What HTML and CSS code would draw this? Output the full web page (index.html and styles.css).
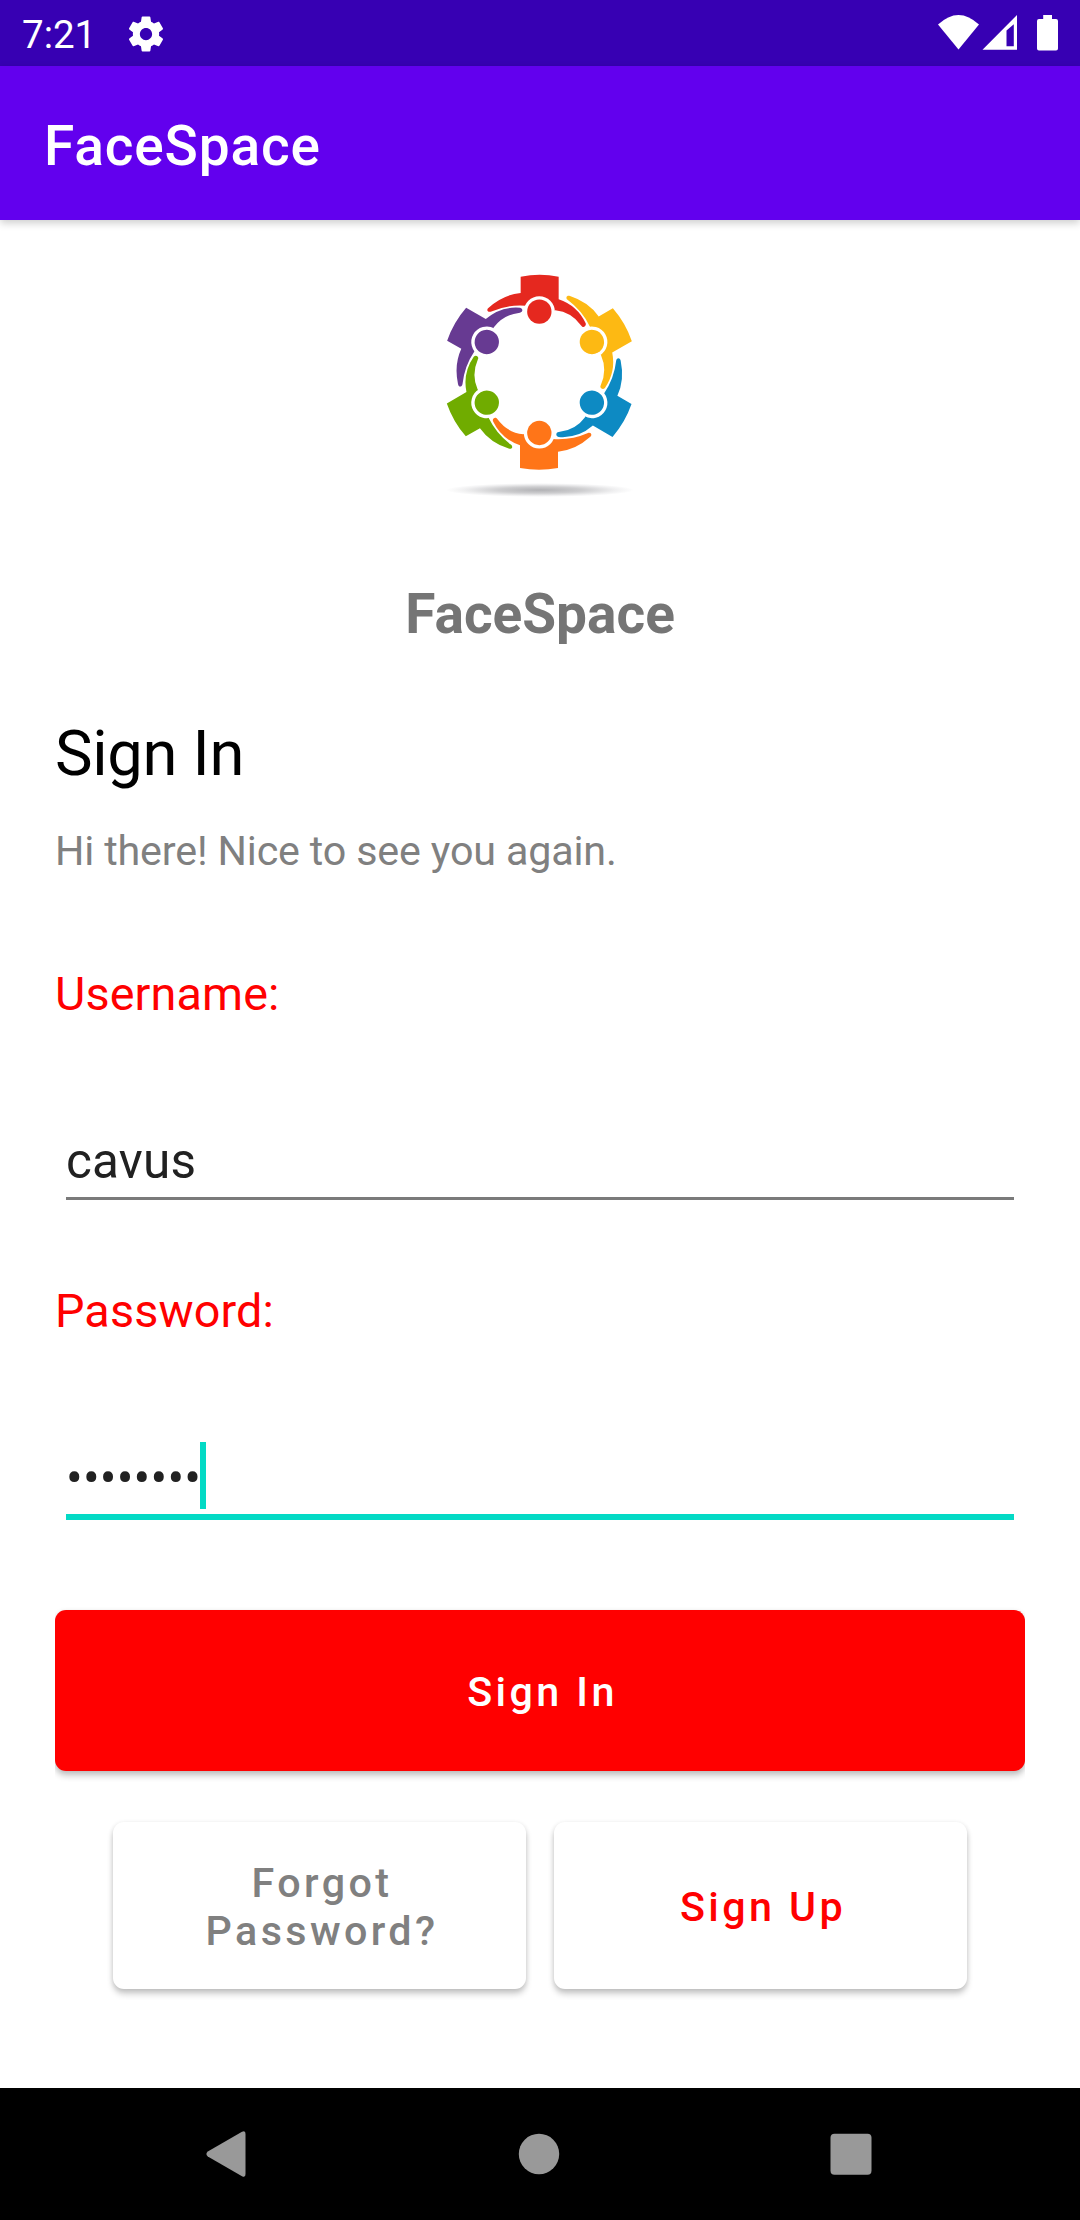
FILE: index.html
```html
<!DOCTYPE html>
<html lang="en">
<head>
<meta charset="utf-8">
<title>FaceSpace</title>
<link rel="stylesheet" href="styles.css">
</head>
<body>
<div class="status-bar">
  <span class="clock">7:21</span>
  <svg class="gear" viewBox="0 0 24 24"><path d="M19.43 12.98c.04-.32.07-.64.07-.98s-.03-.66-.07-.98l2.11-1.65c.19-.15.24-.42.12-.64l-2-3.46c-.12-.22-.39-.3-.61-.22l-2.49 1c-.52-.4-1.08-.73-1.69-.98l-.38-2.65C14.46 2.18 14.25 2 14 2h-4c-.25 0-.46.18-.49.42l-.38 2.65c-.61.25-1.17.59-1.69.98l-2.49-1c-.23-.09-.49 0-.61.22l-2 3.46c-.13.22-.07.49.12.64l2.11 1.65c-.04.32-.07.65-.07.98s.03.66.07.98l-2.11 1.65c-.19.15-.24.42-.12.64l2 3.46c.12.22.39.3.61.22l2.49-1c.52.4 1.08.73 1.69.98l.38 2.65c.03.24.24.42.49.42h4c.25 0 .46-.18.49-.42l.38-2.65c.61-.25 1.17-.59 1.69-.98l2.49 1c.23.09.49 0 .61-.22l2-3.46c.12-.22.07-.49-.12-.64l-2.11-1.65zM12 15.5c-1.93 0-3.5-1.57-3.5-3.5s1.57-3.5 3.5-3.5 3.5 1.57 3.5 3.5-1.57 3.5-3.5 3.5z"/></svg>
  <svg class="indicators" viewBox="0 0 120 36">
    <path d="M0 9.6Q20.500-9.600 41 9.600L20.500 34.500Z"/>
    <path fill-rule="evenodd" d="M44.500 34.800L79 0V34.800ZM68.500 15.500V31.300H75.800V9.200Z"/>
    <path d="M105.200 0H114V4H118Q120 4 120 6V33.500Q120 35.500 118 35.500H101Q99 35.500 99 33.500V6Q99 4 101 4H105.200Z"/>
  </svg>
</div>
<header class="app-bar">FaceSpace</header>
<main class="content">
  <svg class="logo" viewBox="0 0 660 750">
    <defs>
      <radialGradient id="shade">
        <stop offset="0" stop-color="#b2b2b5"/>
        <stop offset=".45" stop-color="#cdcdcf"/>
        <stop offset=".8" stop-color="#f0f0f1"/>
        <stop offset="1" stop-color="#fff"/>
      </radialGradient>
      <g id="person">
        <path d="M272 50Q329 39 386 50V118Q442 137 467 190C470 199 459 205 454 197Q424 156 376 151L328 168L287 137Q232 133 182 155C173 158 168 149 176 143Q219 104 272 99Z"/>
        <circle cx="328" cy="155" r="46.500" fill="#fff"/>
        <circle cx="328" cy="155" r="36.500"/>
      </g>
    </defs>
    <use href="#person" fill="#e5281f"/>
    <use href="#person" fill="#fdb913" transform="rotate(60 328 337)"/>
    <use href="#person" fill="#0d8ac3" transform="rotate(120 328 337)"/>
    <use href="#person" fill="#ff7518" transform="rotate(180 328 337)"/>
    <use href="#person" fill="#70ac00" transform="rotate(240 328 337)"/>
    <use href="#person" fill="#673a92" transform="rotate(300 328 337)"/>
    <ellipse cx="330" cy="690" rx="282" ry="21" fill="url(#shade)"/>
  </svg>
  <h1 class="brand">FaceSpace</h1>
  <h2 class="heading">Sign In</h2>
  <p class="greeting">Hi there! Nice to see you again.</p>
  <div class="label">Username:</div>
  <div class="field">cavus</div>
  <div class="label label-password">Password:</div>
  <div class="field field-active">••••••••<span class="caret"></span></div>
  <button class="button button-primary">Sign In</button>
  <div class="actions">
    <button class="button button-forgot">Forgot<br>Password?</button>
    <button class="button button-signup">Sign Up</button>
  </div>
</main>
<nav class="nav-bar">
  <svg class="nav-icon" viewBox="0 0 46 46"><path d="M39 .8Q42.500-1.200 42.500 3V43Q42.500 47.200 39 45.200L4.800 25.600Q2 23 4.800 20.400Z"/></svg>
  <svg class="nav-icon" viewBox="0 0 46 46"><circle cx="23" cy="23" r="20.200"/></svg>
  <svg class="nav-icon" viewBox="0 0 46 46"><rect x="2.500" y="2.700" width="41" height="41" rx="4"/></svg>
</nav>
</body>
</html>
```
FILE: styles.css
```css
* { box-sizing: border-box; }
body {
  margin: 0;
  width: 1080px;
  height: 2220px;
  display: flex;
  flex-direction: column;
  background: #fff;
  font-family: Roboto, sans-serif;
  overflow: hidden;
}
svg { display: block; flex: none; }
.status-bar {
  height: 66px;
  padding: 0 22px;
  display: flex;
  align-items: center;
  background: #3700b3;
  color: #fff;
  fill: #fff;
}
.clock { width: 103px; padding-top: 3px; font-size: 38.5px; line-height: 46px; }
.gear { width: 42px; height: 42px; margin-top: 1px; }
.indicators { width: 120px; height: 36px; margin-left: auto; }
.app-bar {
  flex: none;
  height: 154px;
  padding: 5px 44px 0;
  display: flex;
  align-items: center;
  background: #6200ee;
  color: #fff;
  font-size: 55px;
  font-weight: 500;
  letter-spacing: 0.85px;
  box-shadow: 0 3px 8px rgba(0, 0, 0, .2);
}
.content {
  flex: 1;
  padding: 40px 55px 0;
  display: flex;
  flex-direction: column;
}
.logo { width: 220px; height: 250px; align-self: center; }
.brand {
  margin: 72px 0 0;
  font-size: 55px;
  line-height: 64px;
  font-weight: 700;
  text-align: center;
  color: #757575;
}
.heading {
  margin: 70px 0 0;
  font-size: 63.25px;
  line-height: 74px;
  font-weight: 400;
  letter-spacing: -0.3px;
  color: #000;
}
.greeting { margin: 37px 0 0; font-size: 41.25px; line-height: 48px; letter-spacing: -0.16px; color: #808080; }
.label { margin-top: 92px; font-size: 46.75px; line-height: 55px; letter-spacing: 0.12px; color: #f00; }
.label-password { margin-top: 84px; }
.field {
  margin: 110px 11px 0;
  padding-bottom: 7px;
  display: flex;
  border-bottom: 3px solid #7a7a7a;
  font-size: 49.5px;
  line-height: 58px;
  letter-spacing: 0.2px;
  color: #212121;
}
.field-active { border-bottom: 6px solid #03dac5; }
.caret { width: 6px; height: 67px; margin: -7px 0 -9px -1px; background: #03dac5; }
.button {
  padding: 3px 0 0 5px;
  border: 0;
  border-radius: 11px;
  font-family: inherit;
  font-size: 41.25px;
  line-height: 48px;
  font-weight: 500;
  letter-spacing: 3.4px;
  background: #fff;
  box-shadow: 0 5px 6px rgba(0, 0, 0, .2), 0 1px 5px rgba(0, 0, 0, .1);
}
.button-primary {
  height: 161px;
  margin-top: 90px;
  background: #f00;
  color: #fff;
  clip-path: inset(-4px 0 -20px);
}
.actions {
  margin: 51px 58px 0;
  height: 167px;
  display: grid;
  grid-template-columns: 1fr 1fr;
  gap: 28px;
}
.button-forgot { color: #808080; }
.button-signup { color: #f00; }
.nav-bar {
  height: 132px;
  padding: 0 206px 0 203px;
  display: flex;
  align-items: center;
  justify-content: space-between;
  background: #000;
  fill: #999;
}
.nav-icon { width: 46px; height: 46px; }
```
